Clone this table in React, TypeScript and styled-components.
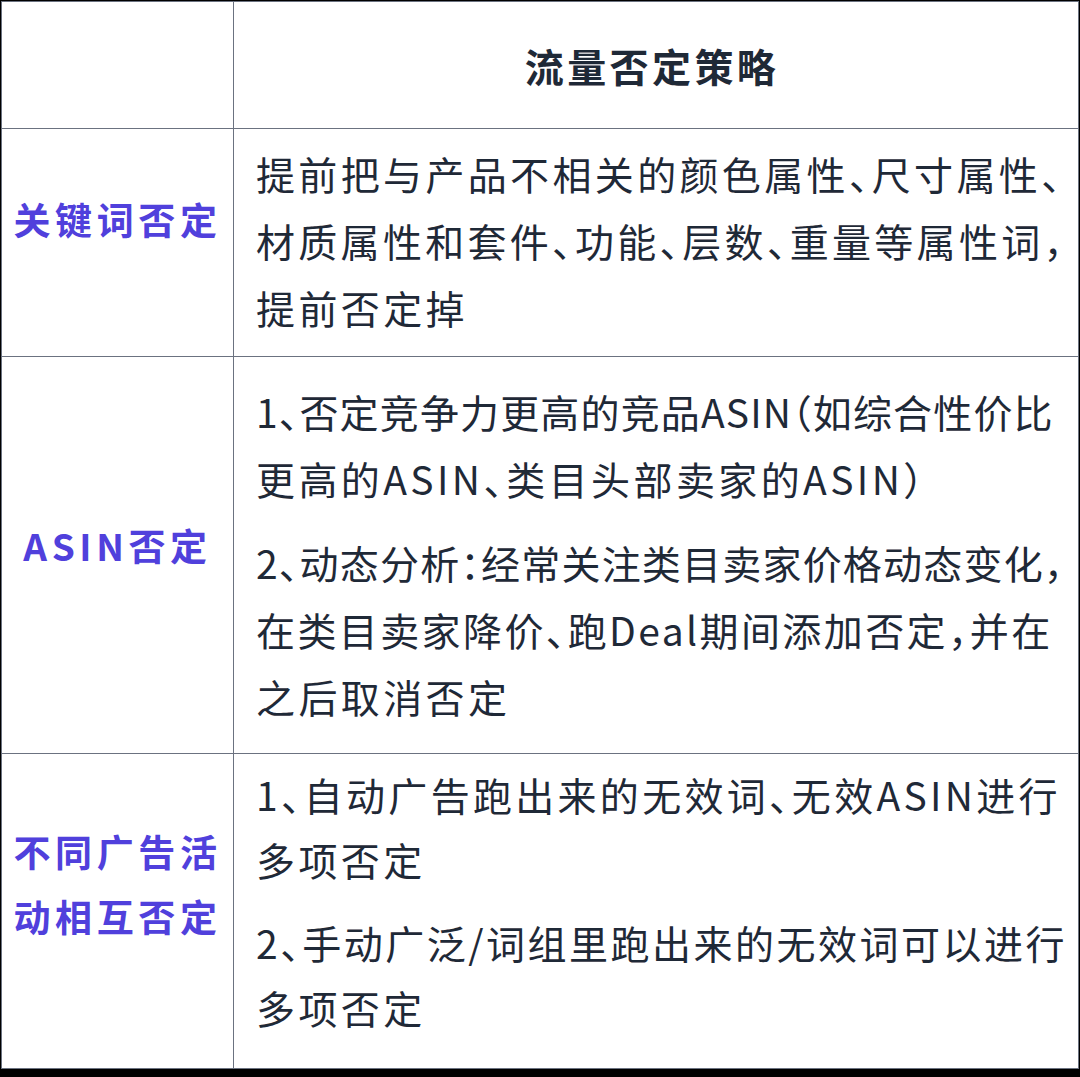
import React from 'react'
import styled, { createGlobalStyle } from 'styled-components'

const GlobalStyle = createGlobalStyle`
  html, body {
    margin: 0;
    background: #000;
  }
  body {
    font-family: 'Noto Sans CJK SC', 'Noto Sans', sans-serif;
  }
`

const LINE = '#6b7280'
const INK = '#1f2937'
const ACCENT = '#5040dc'

const Frame = styled.div`
  width: 1080px;
  box-sizing: border-box;
  padding: 1px 1px 8px 1px;
  background: #000;
`

const Table = styled.div`
  display: grid;
  grid-template-columns: 232px 1fr;
  background: #fff;
  border-top: 1px solid ${LINE};
  border-left: 1px solid ${LINE};
`

const Cell = styled.div`
  box-sizing: border-box;
  border-right: 1px solid ${LINE};
  border-bottom: 1px solid ${LINE};
`

const HeadCell = styled(Cell)`
  padding: 30px 8px 29px 0;
  text-align: center;
  color: ${INK};
  font-size: 39px;
  font-weight: 700;
  letter-spacing: 3.4px;
  line-height: 67px;
`

const LabelCell = styled(Cell)<{ $lift: number }>`
  display: flex;
  align-items: center;
  justify-content: center;
  padding-bottom: ${({ $lift }) => $lift}px;
  text-align: center;
  color: ${ACCENT};
  font-size: 37px;
  font-weight: 700;
  letter-spacing: 4.6px;
  line-height: 65px;
`

const LabelLine = styled.span`
  display: block;
`

const BodyCell = styled(Cell)<{ $top: number; $bottom: number; $gap: number; $lh: number }>`
  padding: ${({ $top, $bottom }) => `${$top}px 0 ${$bottom}px 22px`};
  color: ${INK};
  font-size: 39px;
  letter-spacing: 3.4px;
  line-height: ${({ $lh }) => $lh}px;
  white-space: nowrap;
  font-feature-settings: 'halt';

  p {
    margin: 0;
  }
  p + p {
    margin-top: ${({ $gap }) => $gap}px;
  }
`

// full lines are set a little tighter so they close on the right edge
const Line = styled.span<{ $track?: number }>`
  display: block;
  ${({ $track }) => ($track !== undefined ? `letter-spacing: ${$track}px;` : '')}
`

interface TextLine {
  text: string
  track?: number
}

interface Row {
  label: string[]
  lift: number
  top: number
  bottom: number
  gap: number
  lh: number
  paras: TextLine[][]
}

const rows: Row[] = [
  {
    label: ['关键词否定'],
    lift: 47,
    top: 11,
    bottom: 15,
    gap: 0,
    lh: 67,
    paras: [
      [
        { text: '提前把与产品不相关的颜色属性、尺寸属性、', track: 3.35 },
        { text: '材质属性和套件、功能、层数、重量等属性词，', track: 3.3 },
        { text: '提前否定掉' },
      ],
    ],
  },
  {
    label: ['ASIN否定'],
    lift: 19,
    top: 21,
    bottom: 23,
    gap: 17,
    lh: 67,
    paras: [
      [
        { text: '1、否定竞争力更高的竞品ASIN（如综合性价比', track: 1.15 },
        { text: '更高的ASIN、类目头部卖家的ASIN）' },
      ],
      [
        { text: '2、动态分析：经常关注类目卖家价格动态变化，', track: 1.2 },
        { text: '在类目卖家降价、跑Deal期间添加否定，并在', track: 2.4 },
        { text: '之后取消否定' },
      ],
    ],
  },
  {
    label: ['不同广告活', '动相互否定'],
    lift: 54,
    top: 8,
    bottom: 28,
    gap: 18,
    lh: 65,
    paras: [
      [{ text: '1、自动广告跑出来的无效词、无效ASIN进行', track: 3.3 }, { text: '多项否定' }],
      [{ text: '2、手动广泛/词组里跑出来的无效词可以进行', track: 2.5 }, { text: '多项否定' }],
    ],
  },
]

export default function App() {
  return (
    <Frame>
      <GlobalStyle />
      <Table>
        <HeadCell />
        <HeadCell>流量否定策略</HeadCell>
        {rows.map((row, i) => (
          <React.Fragment key={i}>
            <LabelCell $lift={row.lift}>
              <div>
                {row.label.map((l, k) => (
                  <LabelLine key={k}>{l}</LabelLine>
                ))}
              </div>
            </LabelCell>
            <BodyCell $top={row.top} $bottom={row.bottom} $gap={row.gap} $lh={row.lh}>
              {row.paras.map((p, j) => (
                <p key={j}>
                  {p.map((l, k) => (
                    <Line key={k} $track={l.track}>
                      {l.text}
                    </Line>
                  ))}
                </p>
              ))}
            </BodyCell>
          </React.Fragment>
        ))}
      </Table>
    </Frame>
  )
}
